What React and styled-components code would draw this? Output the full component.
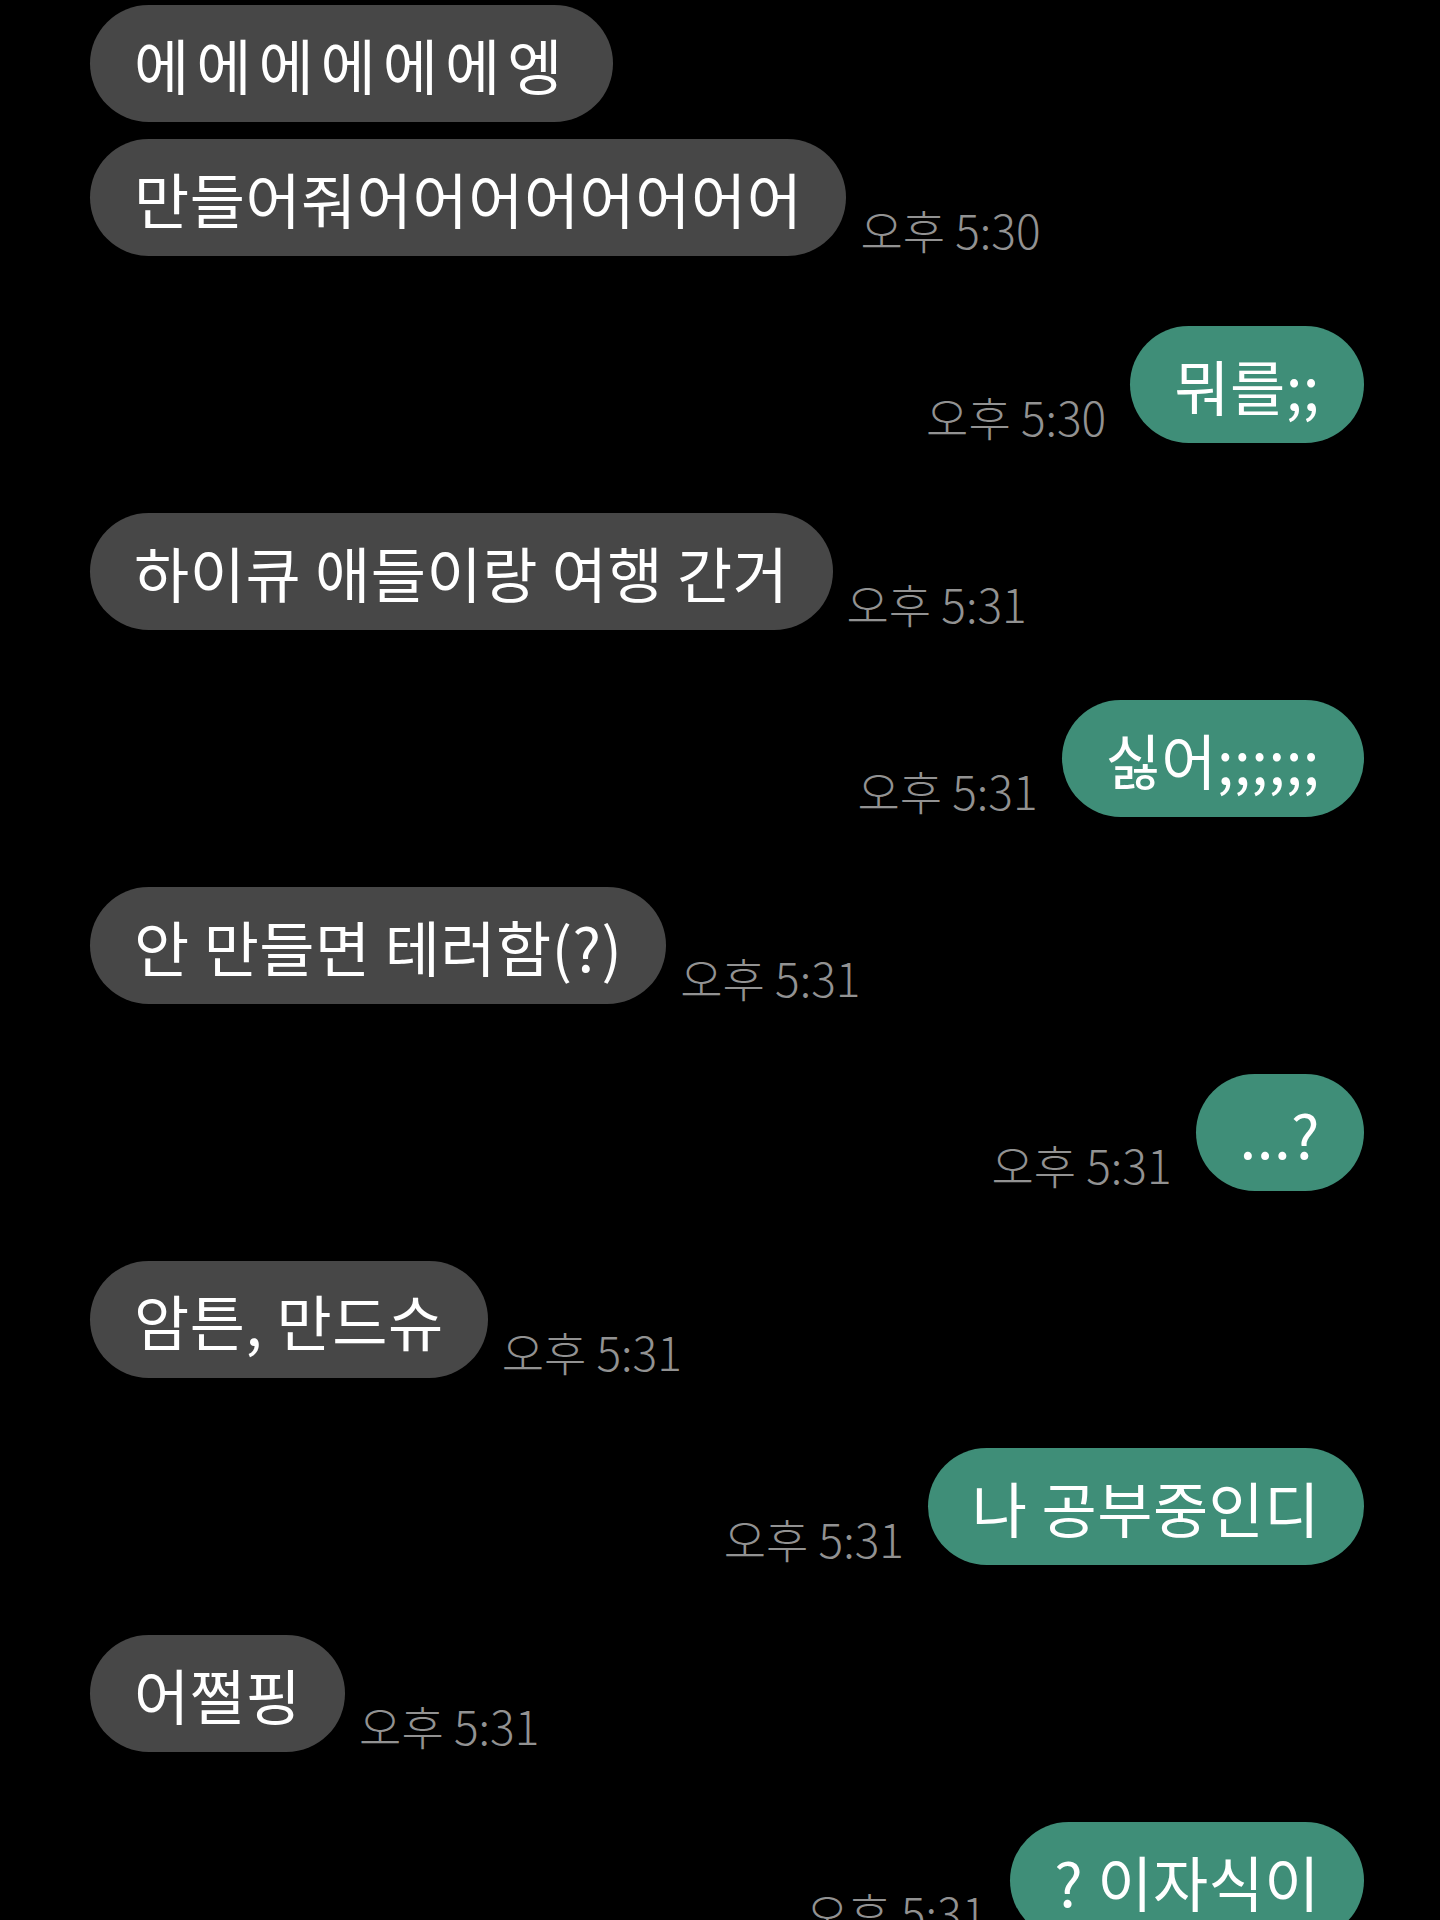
import React from 'react';
import styled, { createGlobalStyle } from 'styled-components';

const GlobalStyle = createGlobalStyle`
  html, body {
    margin: 0;
    padding: 0;
    background: #000;
  }
  body {
    font-family: "Noto Sans CJK KR", "Noto Sans", sans-serif;
    overflow: hidden;
  }
`;

// tracking: extra letter-spacing where the phone font's glyphs run wider
let messages = [
  { id: 1, mine: false, texts: ['에에에에에에엥', '만들어줘어어어어어어어어'], tracking: [7, 0.5], time: '오후 5:30' },
  { id: 2, mine: true, texts: ['뭐를;;'], time: '오후 5:30' },
  { id: 3, mine: false, texts: ['하이큐 애들이랑 여행 간거'], time: '오후 5:31' },
  { id: 4, mine: true, texts: ['싫어;;;;;;'], time: '오후 5:31' },
  { id: 5, mine: false, texts: ['안 만들면 테러함(?)'], time: '오후 5:31' },
  { id: 6, mine: true, texts: ['...?'], time: '오후 5:31' },
  { id: 7, mine: false, texts: ['암튼, 만드슈'], time: '오후 5:31' },
  { id: 8, mine: true, texts: ['나 공부중인디'], time: '오후 5:31' },
  { id: 9, mine: false, texts: ['어쩔핑'], time: '오후 5:31' },
  { id: 10, mine: true, texts: ['? 이자식이'], time: '오후 5:31' },
];

let Group = ({ msg }) => {
  let last = msg.texts.length - 1;
  let mine = msg.mine ? 1 : 0;
  return (
    <GroupBox>
      {msg.texts.map((t, i) => (
        <Row key={i} mine={mine}>
          <Bubble mine={mine} tracking={msg.tracking ? msg.tracking[i] : 0.5}>{t}</Bubble>
          {i === last && <Time>{msg.time}</Time>}
        </Row>
      ))}
    </GroupBox>
  );
};

const App = () => (
  <>
    <GlobalStyle />
    <Screen>
      {messages.map((m) => <Group key={m.id} msg={m} />)}
    </Screen>
  </>
);

const Screen = styled.div`
  width: 1440px;
  height: 1920px;
  box-sizing: border-box;
  padding: 5px 76px 0 90px;
  display: flex;
  flex-direction: column;
  gap: 70px;
  overflow: hidden;
`;

const GroupBox = styled.div`
  display: flex;
  flex-direction: column;
  gap: 17px;
`;

const Row = styled.div`
  display: flex;
  flex-direction: ${(p) => (p.mine ? 'row-reverse' : 'row')};
  align-items: flex-end;
  gap: ${(p) => (p.mine ? '24px' : '14px')};
`;

const Bubble = styled.div`
  height: 117px;
  box-sizing: border-box;
  display: flex;
  align-items: center;
  padding: 0 44px;
  border-radius: 59px;
  background: ${(p) => (p.mine ? '#3f8e78' : '#474747')};
  color: #ffffff;
  font-size: 60px;
  font-weight: 400;
  letter-spacing: ${(p) => p.tracking}px;
  white-space: nowrap;
  flex-shrink: 0;
`;

const Time = styled.span`
  color: #929292;
  font-size: 46px;
  font-weight: 300;
  line-height: 1;
  margin-bottom: 4px;
  white-space: nowrap;
`;

export default App;
